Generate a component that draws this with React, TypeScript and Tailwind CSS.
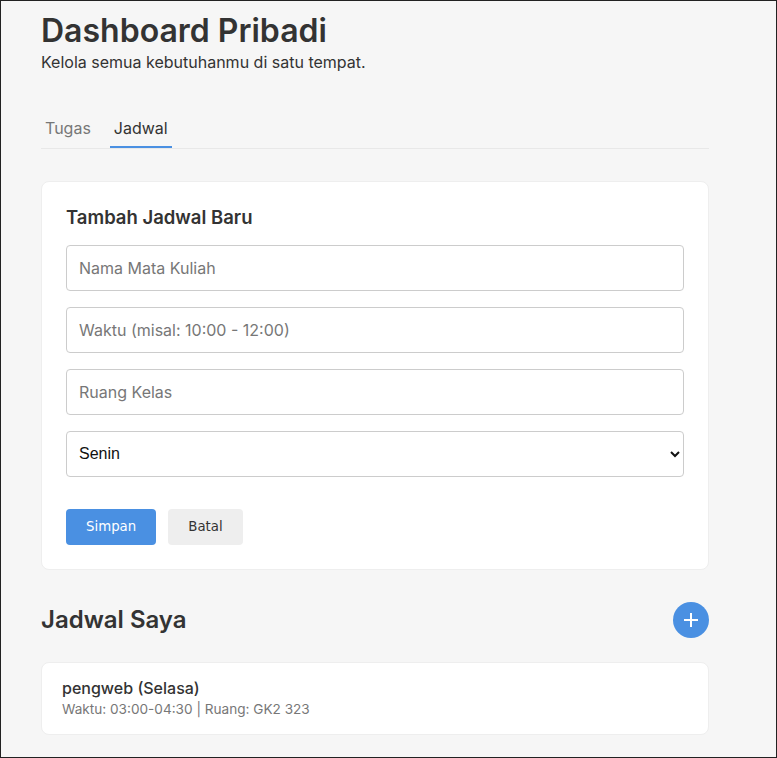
import React from 'react';

const inputClass =
  'h-[46px] w-full rounded-[4px] border border-[#ccc] bg-white px-3 text-[16px] text-[#333] placeholder:text-[#777] outline-none';

const App: React.FC = () => {
  return (
    <div className="h-[758px] overflow-hidden border border-[#222] bg-[#f6f6f6] font-['Inter',sans-serif] text-[#333]">
      <div className="w-[668px] ml-[40px] pt-[12px]">
        <h1 className="text-[32px] font-semibold leading-[1.15]">Dashboard Pribadi</h1>
        <p className="text-[16px] leading-[1.5]">Kelola semua kebutuhanmu di satu tempat.</p>

        <div className="mt-[36px] flex gap-[15px] border-b border-[#e8e8e8]">
          <button className="px-1 pt-[6px] pb-[6px] border-b-2 border-transparent text-[16px] leading-[24px] text-[#777] font-['Inter',sans-serif]">
            Tugas
          </button>
          <button className="px-1 pt-[6px] pb-[6px] border-b-2 border-[#4a90e2] text-[16px] leading-[24px] text-[#333] font-['Inter',sans-serif]">
            Jadwal
          </button>
        </div>

        <div className="mt-[32px] rounded-[8px] border border-[#eee] bg-white p-6">
          <h2 className="text-[18.5px] font-semibold leading-[1.2] mb-[17px]">Tambah Jadwal Baru</h2>
          <div className="flex flex-col gap-4">
            <input className={inputClass} placeholder="Nama Mata Kuliah" />
            <input className={inputClass} placeholder="Waktu (misal: 10:00 - 12:00)" />
            <input className={inputClass} placeholder="Ruang Kelas" />
            <select className="h-[46px] w-full rounded-[4px] border border-[#ccc] bg-white pl-2 pr-1 text-[16px] text-[#111] font-['Liberation_Sans',Arial,sans-serif] outline-none">
              <option>Senin</option>
              <option>Selasa</option>
              <option>Rabu</option>
              <option>Kamis</option>
              <option>Jumat</option>
            </select>
          </div>
          <div className="mt-8 flex gap-3">
            <button className="h-9 rounded-[4px] bg-[#4a90e2] px-5 text-[13.33px] text-white font-['DejaVu_Sans',sans-serif]">
              Simpan
            </button>
            <button className="h-9 rounded-[4px] bg-[#eee] px-5 text-[13.33px] text-[#333] font-['DejaVu_Sans',sans-serif]">
              Batal
            </button>
          </div>
        </div>

        <div className="mt-8 flex items-center justify-between">
          <h2 className="text-[24px] font-semibold">Jadwal Saya</h2>
          <button className="flex h-9 w-9 items-center justify-center rounded-full bg-[#4a90e2]">
            <svg width="16" height="16" viewBox="0 0 16 16" fill="none" stroke="white" strokeWidth="2">
              <path d="M8 1v14M1 8h14" />
            </svg>
          </button>
        </div>

        <div className="mt-6 rounded-[8px] border border-[#eee] bg-white px-5 py-4">
          <div className="text-[16px] font-medium leading-[1.2]">pengweb (Selasa)</div>
          <div className="mt-[3px] text-[13.6px] leading-[1.25] text-[#777]">Waktu: 03:00-04:30 | Ruang: GK2 323</div>
        </div>
      </div>
    </div>
  );
};

export default App;
